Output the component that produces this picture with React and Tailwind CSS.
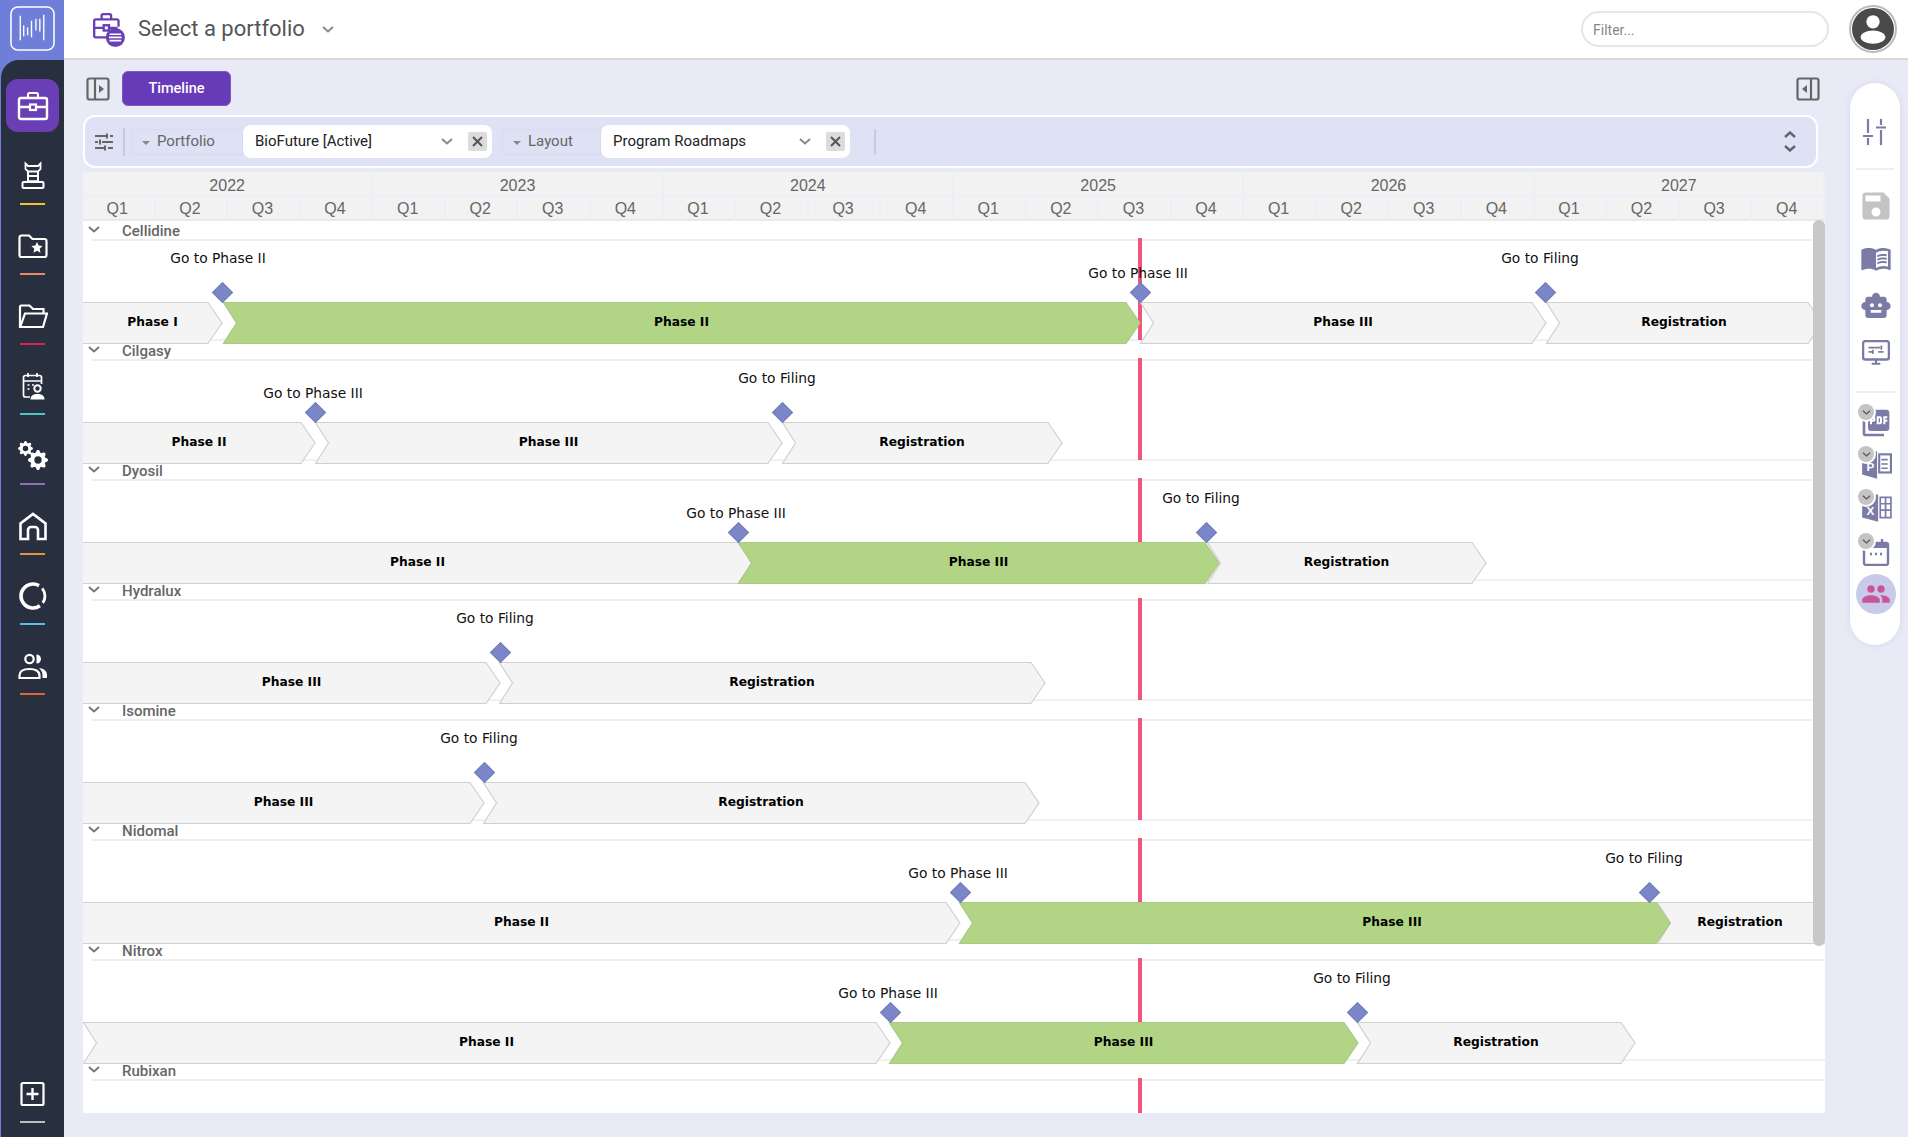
import React from "react";
import { MdSave, MdMenuBook, MdSmartToy, MdPictureAsPdf, MdPeople } from "react-icons/md";
import { BsGearFill } from "react-icons/bs";

const ORIGIN = 83;

const Chevron = ({ className = "", color = "#777", w = 12, h = 7, sw = 2 }) => (
  <svg className={className} width={w} height={h} viewBox="0 0 12 7" fill="none">
    <path d="M1 1l5 4.5L11 1" stroke={color} strokeWidth={sw} />
  </svg>
);

const Logo = () => (
  <svg width="45" height="45" viewBox="0 0 46 46" fill="none" stroke="#fff">
    <rect x="1" y="1" width="44" height="44" rx="7" strokeWidth="1.6" />
    <g strokeWidth="1.4">
      <path d="M10.500 10V35M14 20V31M18 22V30M22 15V32M26.500 13V25M30.500 13V26M34.500 9V35" />
    </g>
  </svg>
);

const S = ({ children, size = 30, vb = "0 0 30 30" }) => (
  <svg width={size} height={size} viewBox={vb} fill="none" stroke="#fff" strokeWidth="2">{children}</svg>
);

const IconBriefcase = () => (
  <S size={32} vb="0 0 32 32">
    <path d="M11 8V4.500A1.500 1.500 0 0 1 12.500 3h7A1.500 1.500 0 0 1 21 4.500V8" />
    <rect x="2" y="8" width="28" height="21" rx="2" strokeWidth="2.400" />
    <path d="M2 17h11M19 17h11" strokeWidth="2.400" />
    <rect x="13" y="14.500" width="6" height="5.500" strokeWidth="2.200" />
  </S>
);
const IconTower = () => (
  <S size={30}>
    <path d="M7.500 2.500L10 5h10l2.500-2.500V8L20 10.500H10L7.500 8z" strokeWidth="1.800" />
    <path d="M10 10.500V20M20 10.500V20M10 15h10" strokeWidth="2" />
    <path d="M10 20h10" strokeWidth="1.500" />
    <rect x="4.500" y="21" width="21" height="6" rx="1" strokeWidth="2" />
  </S>
);
const IconFolderStar = () => (
  <S size={30}>
    <path d="M1.500 6.500A2 2 0 0 1 3.500 4.500H11l3.500 3.500h12a2 2 0 0 1 2 2v14a2 2 0 0 1-2 2h-23a2 2 0 0 1-2-2z" strokeWidth="2.200" />
    <path d="M19 11l1.700 3.600 3.900.5-2.900 2.700.8 3.900-3.500-2-3.500 2 .8-3.900-2.900-2.700 3.900-.5z" fill="#fff" stroke="none" />
  </S>
);
const IconFolderOpen = () => (
  <S size={30}>
    <path d="M2 26V6a1.500 1.500 0 0 1 1.500-1.500h8L15 8h10.500V12" strokeWidth="2.200" />
    <path d="M2.200 26L7 12.500h22L25 26z" strokeWidth="2.200" />
  </S>
);
const IconCalUser = () => (
  <S size={30}>
    <path d="M12 26H7.500A2 2 0 0 1 5.500 24V6.500a2 2 0 0 1 2-2h14a2 2 0 0 1 2 2V13" strokeWidth="1.700" />
    <path d="M5.500 10h18M10 2v4M19 2v4" strokeWidth="1.700" />
    <path d="M9.500 14h2M14 14h2M9.500 18h2" strokeWidth="1.600" />
    <circle cx="19.500" cy="17.500" r="3.200" strokeWidth="2" />
    <path d="M12.500 28.500c0-4 3-5.500 7-5.500s7 1.500 7 5.500z" fill="#fff" stroke="none" />
  </S>
);
const IconGears = () => (
  <div className="relative w-[30px] h-[30px]">
    <BsGearFill className="absolute left-0 top-0 text-white" size={15} />
    <BsGearFill className="absolute left-[10px] top-[9px] text-white" size={20} />
  </div>
);
const IconHome = () => (
  <S size={30}>
    <path d="M2.500 28V12.500L15 3l12.500 9.500V28H20v-9a3 3 0 0 0-3-3h-4a3 3 0 0 0-3 3v9z" strokeWidth="2.600" />
  </S>
);
const IconDonut = () => (
  <S size={30}>
    <path d="M21 4.600A12 12 0 1 0 21.900 24.800" strokeWidth="3.600" />
    <path d="M24.200 7.300A12 12 0 0 1 24.800 21.900" strokeWidth="2.800" />
  </S>
);
const IconUsers = () => (
  <S size={30}>
    <circle cx="11.500" cy="8" r="4.200" strokeWidth="2.200" />
    <path d="M1.500 27v-2.500C1.500 20 6 18 11.500 18s10 2 10 6.500V27z" strokeWidth="2.200" />
    <path d="M18.500 3.500a4.500 4.500 0 0 1 0 9z" fill="#fff" stroke="none" />
    <path d="M21 17c4.500.5 8 2.500 8 7v3h-4.500v-3c0-3-1.500-5-3.500-7z" fill="#fff" stroke="none" />
  </S>
);
const IconAdd = () => (
  <S size={30}>
    <rect x="3.500" y="4" width="22" height="22" rx="1.500" strokeWidth="2.200" />
    <path d="M8.500 15h12M14.500 9v12" strokeWidth="2.400" />
  </S>
);

const PortfolioIcon = () => (
  <svg className="mt-[2px] -ml-[1px]" width="34" height="36" viewBox="0 0 32 34" fill="none" stroke="#6a3fb5" strokeWidth="2.200">
    <path d="M9 7V3.500A1.500 1.500 0 0 1 10.500 2h6A1.500 1.500 0 0 1 18 3.500V7" />
    <path d="M14 24H3.500A1.500 1.500 0 0 1 2 22.500V8.500A1.500 1.500 0 0 1 3.500 7h20A1.500 1.500 0 0 1 25 8.500V14" />
    <path d="M2 15h9M16 15h8" />
    <rect x="11" y="12.500" width="5" height="5" />
    <circle cx="22" cy="24" r="9" fill="#6a3fb5" stroke="none" />
    <path d="M16.500 21h11M16 24h12M16.500 27h11" stroke="#fff" strokeWidth="1.600" />
  </svg>
);

const PanelIcon = ({ flip }) => (
  <svg width="24" height="24" viewBox="0 0 24 24" fill="none" className={flip ? "-scale-x-100" : ""}>
    <rect x="1.500" y="1.500" width="21" height="21" rx="2" stroke="#666" strokeWidth="2.200" />
    <path d="M9 2v20" stroke="#666" strokeWidth="2.200" />
    <path d="M13 8l5 4-5 4z" fill="#666" />
  </svg>
);

const NAV = [
  { icon: <IconTower />, line: "bg-[#f2c230]" },
  { icon: <IconFolderStar />, line: "bg-[#e98a66]" },
  { icon: <IconFolderOpen />, line: "bg-[#d9254f]" },
  { icon: <IconCalUser />, line: "bg-[#4fc3c7]" },
  { icon: <IconGears />, line: "bg-[#9a68c0]" },
  { icon: <IconHome />, line: "bg-[#e8923c]" },
  { icon: <IconDonut />, line: "bg-[#5cbcec]" },
  { icon: <IconUsers />, line: "bg-[#e0633a]" },
];

const NavItem = ({ icon, line }) => (
  <div className="h-[70px] flex flex-col items-center pt-[20px]">
    <div className="h-[30px] w-[30px] flex items-center justify-center">{icon}</div>
    <div className={`mt-[12px] w-[25px] h-[2px] ${line}`} />
  </div>
);

const Sidebar = () => (
  <div className="w-16 shrink-0 bg-[#6f7ed8]">
    <div className="h-full ml-px bg-[#28303f] rounded-tl-[18px] flex flex-col pt-[19px] pb-[8px]">
      <div className="w-[53px] h-[53px] ml-[5px] mb-[9px] rounded-[12px] bg-[#6a3fb5] flex items-center justify-center">
        <IconBriefcase />
      </div>
      {NAV.map((n, i) => (
        <NavItem key={i} {...n} />
      ))}
      <div className="mt-auto">
        <NavItem icon={<IconAdd />} line="bg-[#bdbdbd]" />
      </div>
    </div>
  </div>
);

const TopBar = () => (
  <div className="h-[60px] shrink-0 flex">
    <div className="w-16 shrink-0 bg-[#6f7ed8] flex items-center justify-center pb-[4px] pl-[1px]">
      <Logo />
    </div>
    <div className="flex-1 bg-white border-b-2 border-[#d8d8d8] flex items-center pl-[29px] pr-[11px]">
      <PortfolioIcon />
      <span className="ml-[12px] -mt-[2px] text-[22px] text-[#555] font-[Roboto]">Select a portfolio</span>
      <Chevron className="ml-[17px]" color="#888" />
      <div className="ml-auto w-[248px] h-[36px] rounded-full border-2 border-[#e6e6e6] flex items-center pl-[10px] pt-[2px] text-[14px] text-[#888] font-[Roboto]">
        Filter...
      </div>
      <div className="ml-[20px] w-[48px] h-[48px] rounded-full border-2 border-[#bbb] bg-white p-[1px]">
        <svg viewBox="0 0 44 44" className="w-full h-full">
          <circle cx="22" cy="22" r="22" fill="#4a4a4a" />
          <circle cx="22" cy="14.500" r="7" fill="#fff" />
          <ellipse cx="22" cy="30.500" rx="13" ry="7" fill="#fff" />
        </svg>
      </div>
    </div>
  </div>
);

const SlidersIcon = () => (
  <svg width="20" height="18" viewBox="0 0 20 18" fill="none" stroke="#666" strokeWidth="2">
    <path d="M1 3h11M16 3h3M1 9h3M8 9h11M1 15h9M14 15h5" />
    <path d="M13 .5v5M6 6.500v5M11 12.500v5" />
  </svg>
);

const Select = ({ label, value, first }) => (
  <div className="flex items-center">
    <div className={`h-[26px] ${first ? "w-[112px]" : "w-[99px]"} border border-[#d7daf0] flex items-center pl-[10px] text-[15px] text-[#666]`}>
      <span className="w-0 h-0 border-x-[4px] border-x-transparent border-t-[4px] border-t-[#888] mr-[7px] mt-[2px]" />
      {label}
    </div>
    <div className="w-[249px] h-[33px] rounded-[8px] bg-white flex items-center pl-[12px] text-[15px] text-[#222]">
      {value}
      <Chevron className="ml-auto" color="#888" />
      <div className="ml-[15px] mr-[5px] w-[19px] h-[19px] rounded-[2px] bg-[#dcdcdc] flex items-center justify-center">
        <svg width="11" height="11" viewBox="0 0 11 11" stroke="#555" strokeWidth="2">
          <path d="M1 1l9 9M10 1l-9 9" />
        </svg>
      </div>
    </div>
  </div>
);

const FilterBar = () => (
  <div className="w-[1735px] h-[53px] rounded-[12px] border-2 border-white bg-[#dfe1f5] flex items-center pl-[9px] mb-[4px]">
    <SlidersIcon />
    <div className="ml-[9px] mr-[6px] w-[2px] h-[28px] bg-[#c9cbdc]" />
    <Select label="Portfolio" value="BioFuture [Active]" first />
    <div className="w-[10px]" />
    <Select label="Layout" value="Program Roadmaps" />
    <div className="ml-[24px] w-[2px] h-[26px] bg-[#c9cbdc]" />
    <div className="ml-auto mr-[20px] flex flex-col gap-[7px]">
      <Chevron className="rotate-180" color="#666" sw={2.400} />
      <Chevron color="#666" sw={2.400} />
    </div>
  </div>
);

const YEARS = [2022, 2023, 2024, 2025, 2026, 2027];
const TimelineHeader = () => (
  <div className="h-[49px] w-[1742px] flex bg-[#f2f2f2] text-[#666] text-[16px] font-['Liberation_Sans',sans-serif] border-b-2 border-[#e9e9e9]">
    {YEARS.map((y) => (
      <div key={y} className="flex-1 flex flex-col border-r-2 border-[#eceef8]">
        <div className="h-[25px] flex items-center justify-center pt-[5px] border-b-2 border-[#eceef8]">{y}</div>
        <div className="flex-1 flex">
          {["Q1", "Q2", "Q3", "Q4"].map((q, i) => (
            <div key={q} className={`flex-1 flex items-center justify-center pr-[2px] ${i < 3 ? "border-r-2 border-[#eceef8]" : ""}`}>
              {q}
            </div>
          ))}
        </div>
      </div>
    ))}
  </div>
);

const Bar = ({ from, tip, text, green, flat, center }) => {
  const w = tip - from;
  const left = flat ? from - 3 : from;
  const width = flat ? w + 3 : w;
  const pts = flat
    ? `0,0.500 ${width - 14},0.500 ${width},21 ${width - 14},41.500 0,41.500`
    : `0.500,0.500 ${width - 14},0.500 ${width},21 ${width - 14},41.500 0.500,41.500 13.500,21`;
  const cx = (center ?? (from + tip) / 2) - left;
  return (
    <div className="absolute top-[81px] h-[42px]" style={{ left: left - ORIGIN, width }}>
      <svg className="absolute inset-0 overflow-visible" width={width} height={42}>
        <polygon
          points={pts}
          fill={green ? "#b2d585" : "#f4f4f4"}
          stroke={green ? "#a9c985" : "#d0d0d0"}
          strokeWidth="1.200"
        />
      </svg>
      <span
        className="absolute top-0 h-[42px] leading-[41px] -translate-x-1/2 whitespace-nowrap text-[12.250px] font-bold text-black font-['DejaVu_Sans',sans-serif]"
        style={{ left: cx }}
      >
        {text}
      </span>
    </div>
  );
};

const Mark = ({ x, text, low, dx }) => (
  <>
    <span
      className={`absolute -translate-x-1/2 whitespace-nowrap text-[13.800px] leading-[20px] text-[#111] font-['DejaVu_Sans',sans-serif] ${low ? "top-[42px]" : "top-[27px]"}`}
      style={{ left: x - ORIGIN + dx }}
    >
      {text}
    </span>
    <div
      className="absolute top-[64px] w-[15px] h-[15px] rotate-45 bg-[#7b86c8] border border-[#727db8]"
      style={{ left: x - ORIGIN - 7.500 }}
    />
  </>
);

const II = { text: "Go to Phase II", dx: -4 };
const III = { text: "Go to Phase III", dx: -2, low: true };
const FI = { text: "Go to Filing", dx: -5 };

const ROWS = [
  {
    name: "Cellidine",
    bars: [
      { from: 83, tip: 222, text: "Phase I", flat: true },
      { from: 1140, tip: 1546, text: "Phase III" },
      { from: 1546, tip: 1822, text: "Registration" },
      { from: 223, tip: 1140, text: "Phase II", green: true },
    ],
    marks: [{ x: 222, ...II }, { x: 1140, ...III }, { x: 1545, ...FI }],
  },
  {
    name: "Cilgasy",
    bars: [
      { from: 83, tip: 315, text: "Phase II", flat: true },
      { from: 315, tip: 782, text: "Phase III" },
      { from: 782, tip: 1062, text: "Registration" },
    ],
    marks: [{ x: 315, ...III }, { x: 782, ...FI }],
  },
  {
    name: "Dyosil",
    bars: [
      { from: 83, tip: 752, text: "Phase II", flat: true },
      { from: 1207, tip: 1486, text: "Registration" },
      { from: 738, tip: 1219, text: "Phase III", green: true },
    ],
    marks: [{ x: 738, ...III }, { x: 1206, ...FI }],
  },
  {
    name: "Hydralux",
    bars: [
      { from: 83, tip: 500, text: "Phase III", flat: true },
      { from: 499, tip: 1045, text: "Registration" },
    ],
    marks: [{ x: 500, ...FI }],
  },
  {
    name: "Isomine",
    bars: [
      { from: 83, tip: 484, text: "Phase III", flat: true },
      { from: 483, tip: 1039, text: "Registration" },
    ],
    marks: [{ x: 484, ...FI }],
  },
  {
    name: "Nidomal",
    bars: [
      { from: 83, tip: 960, text: "Phase II", flat: true },
      { from: 1657, tip: 1840, text: "Registration", center: 1740 },
      { from: 959, tip: 1670, text: "Phase III", green: true, center: 1392 },
    ],
    marks: [{ x: 960, ...III }, { x: 1649, ...FI }],
  },
  {
    name: "Nitrox",
    bars: [
      { from: 83, tip: 890, text: "Phase II" },
      { from: 1357, tip: 1635, text: "Registration" },
      { from: 889, tip: 1358, text: "Phase III", green: true },
    ],
    marks: [{ x: 890, ...III }, { x: 1357, ...FI }],
  },
  { name: "Rubixan", bars: [], marks: [] },
];

const Row = ({ name, bars, marks }) => (
  <div className="relative h-[120px] shrink-0">
    <div className="h-[20px] ml-[8px] border-b-2 border-[#eeeeee] flex items-start">
      <Chevron className="mt-[5px] mr-[22px] -ml-[3px]" color="#777" w={12} h={7} />
      <span className="text-[15px] leading-[20px] font-medium text-[#666] font-[Roboto]">{name}</span>
    </div>
    <div className="h-[100px] border-b-2 border-[#f0f0f0]" />
    <div className="absolute top-[17px] left-[1055px] w-[4px] h-[102px] bg-[#f2557c]" />
    {bars.map((b, i) => (
      <Bar key={i} {...b} />
    ))}
    {marks.map((m, i) => (
      <Mark key={i} {...m} />
    ))}
  </div>
);

const Timeline = () => (
  <div className="relative w-[1742px] h-[941px] bg-white overflow-hidden">
    <TimelineHeader />
    <div className="flex flex-col">
      {ROWS.map((r) => (
        <Row key={r.name} {...r} />
      ))}
    </div>
    <div className="absolute left-[1730px] top-[48px] w-[12px] h-[726px] rounded-[6px] bg-[#c8c8c8]" />
  </div>
);

const Slate = "#7b7ba6";

const RailDown = () => (
  <div className="absolute -left-[4px] -top-[5px] z-10 w-[16px] h-[16px] rounded-full bg-[#c4c4c4] ring-2 ring-white flex items-center justify-center">
    <Chevron w={9} h={5} color="#555" sw={1.600} />
  </div>
);

const RailIcon = ({ children, badge, h = 42 }) => (
  <div className="w-full flex justify-center pl-[2px]" style={{ height: h }}>
    <div className="relative w-[28px] h-[28px] flex items-center justify-center [&>svg]:shrink-0">
      {badge && <RailDown />}
      {children}
    </div>
  </div>
);

const RightRail = () => (
  <div className="ml-[25px] mt-[23px] w-[50px] h-[562px] rounded-[25px] bg-white shadow-[0_0_6px_#d5d7ec] flex flex-col items-center pt-[36px]">
    <svg width="24" height="26" viewBox="0 0 24 26" fill="none" stroke={Slate} strokeWidth="2.200">
      <path d="M5 0v14M5 19v7M0 17h10M18 0v6M18 11v15M13 8.500h10" />
    </svg>
    <div className="w-[38px] h-[2px] bg-[#eeeeee] mt-[23px] mb-[22px]" />
    <div className="w-full flex flex-col">
      <RailIcon h={52}><MdSave size={36} color="#c4c4c4" /></RailIcon>
      <RailIcon h={48}><MdMenuBook size={32} color={Slate} /></RailIcon>
      <RailIcon h={47}><MdSmartToy size={32} color={Slate} /></RailIcon>
      <RailIcon h={28}>
        <svg width="28" height="26" viewBox="0 0 26 24" fill="none" stroke={Slate} strokeWidth="2">
          <rect x="1" y="1" width="24" height="17" rx="2" strokeWidth="2.200" />
          <path d="M9 22h8M13 18v4" />
          <path d="M6 7h11M15 11H20M6 11h5M18 5v4M10 9v4" strokeWidth="1.600" />
        </svg>
      </RailIcon>
    </div>
    <div className="w-[39px] h-[2px] bg-[#eeeeee] mt-[24px] mb-[16px]" />
    <div className="w-full flex flex-col">
      <RailIcon badge h={42}><MdPictureAsPdf size={32} color={Slate} /></RailIcon>
      <RailIcon badge h={43}>
        <svg width="32" height="32" viewBox="0 0 30 30">
          <path d="M2 6L16 2V28L2 24Z" fill={Slate} />
          <text x="6" y="21" fontSize="11" fontWeight="700" fill="#fff" fontFamily="Liberation Sans">P</text>
          <rect x="18" y="5" width="11" height="17" fill="none" stroke={Slate} strokeWidth="2" />
          <path d="M20 10h6M20 14h6M20 18h6" stroke={Slate} strokeWidth="1.500" />
        </svg>
      </RailIcon>
      <RailIcon badge h={44}>
        <svg width="32" height="32" viewBox="0 0 30 30">
          <path d="M2 6L17 2V28L2 24Z" fill={Slate} />
          <text x="6" y="22" fontSize="11" fontWeight="700" fill="#fff" fontFamily="Liberation Sans">X</text>
          <path d="M19 5h10v19H19zM19 11h10M19 17h10M24 5v19" fill="none" stroke={Slate} strokeWidth="1.600" />
        </svg>
      </RailIcon>
      <RailIcon badge h={36}>
        <svg width="28" height="28" viewBox="0 0 28 28" fill="none">
          <rect x="2" y="5" width="24" height="22" rx="2" stroke={Slate} strokeWidth="2.400" />
          <rect x="2" y="5" width="24" height="5" fill={Slate} />
          <path d="M20 1v6" stroke={Slate} strokeWidth="2.400" />
          <path d="M8 16h2M13 16h2M18 16h2" stroke={Slate} strokeWidth="2.400" />
        </svg>
      </RailIcon>
    </div>
    <div className="w-[40px] h-[40px] rounded-full bg-[#c8cbe8] flex items-center justify-center ml-[2px]">
      <MdPeople size={30} color="#c8559b" />
    </div>
  </div>
);

export default function App() {
  return (
    <div className="w-full h-screen overflow-hidden flex flex-col bg-[#e8eaf6] font-[Roboto]">
      <TopBar />
      <div className="flex-1 flex min-h-0">
        <Sidebar />
        <div className="ml-[19px] w-[1742px] shrink-0 pt-[11px]">
          <div className="h-[35px] flex items-center mb-[9px]">
            <div className="ml-[3px]"><PanelIcon /></div>
            <button className="ml-[12px] w-[109px] h-[35px] rounded-[6px] border border-[#7e57c2] bg-[#673ab7] text-white text-[14.500px] font-medium">
              Timeline
            </button>
            <div className="ml-auto mr-[5px]"><PanelIcon flip /></div>
          </div>
          <FilterBar />
          <Timeline />
        </div>
        <RightRail />
      </div>
    </div>
  );
}
